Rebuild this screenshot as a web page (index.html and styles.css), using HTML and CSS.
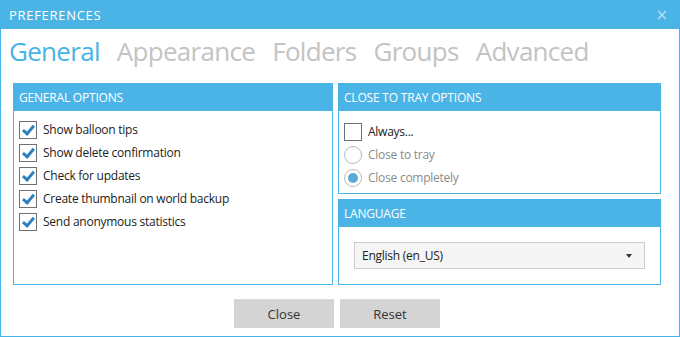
FILE: index.html
```html
<!DOCTYPE html>
<html lang="en">
<head>
    <meta charset="UTF-8">
    <title>Preferences</title>
    <link rel="stylesheet" href="styles.css">
</head>
<body>

    <div class="window">
        <!-- Title bar -->
        <div class="titlebar">
            <span class="title">PREFERENCES</span>
            <svg class="close-x" width="10" height="10" viewBox="0 0 10 10">
                <path d="M1 1 L9 9 M9 1 L1 9" stroke="#b7e1f6" stroke-width="1.4" fill="none"/>
            </svg>
        </div>

        <!-- Tabs -->
        <div class="tabs">
            <span class="tab active">General</span>
            <span class="tab">Appearance</span>
            <span class="tab">Folders</span>
            <span class="tab">Groups</span>
            <span class="tab">Advanced</span>
        </div>

        <!-- Panels -->
        <div class="panels">
            <div class="panel general">
                <div class="panel-header">GENERAL OPTIONS</div>
                <div class="panel-body">
                    <label class="option"><span class="check checked"></span>Show balloon tips</label>
                    <label class="option"><span class="check checked"></span>Show delete confirmation</label>
                    <label class="option"><span class="check checked"></span>Check for updates</label>
                    <label class="option"><span class="check checked"></span>Create thumbnail on world backup</label>
                    <label class="option"><span class="check checked"></span>Send anonymous statistics</label>
                </div>
            </div>

            <div class="right-col">
                <div class="panel tray">
                    <div class="panel-header">CLOSE TO TRAY OPTIONS</div>
                    <div class="panel-body">
                        <label class="option"><span class="check"></span>Always...</label>
                        <label class="option disabled"><span class="radio"></span>Close to tray</label>
                        <label class="option disabled"><span class="radio selected"></span>Close completely</label>
                    </div>
                </div>
                <div class="panel language">
                    <div class="panel-header">LANGUAGE</div>
                    <div class="panel-body">
                        <div class="dropdown">
                            <span>English (en_US)</span>
                            <span class="arrow"></span>
                        </div>
                    </div>
                </div>
            </div>
        </div>

        <!-- Buttons -->
        <div class="buttons">
            <button class="btn">Close</button>
            <button class="btn">Reset</button>
        </div>
    </div>

</body>
</html>
```

FILE: styles.css
```css
body {
    margin: 0;
    padding: 0;
    font-family: "Segoe UI", "Open Sans", sans-serif;
    background-color: #ffffff;
}

.window {
    width: 680px;
    height: 337px;
    box-sizing: border-box;
    border: 1px solid #47b3e6;
    display: flex;
    flex-direction: column;
}

/* Title bar */
.titlebar {
    height: 28px;
    background-color: #4bb4e6;
    display: flex;
    align-items: center;
    justify-content: space-between;
    padding: 1px 12px 0 8px;
    margin-top: -1px;
}

.title {
    color: #ffffff;
    font-size: 13px;
    letter-spacing: 0.7px;
}

/* Tabs */
.tabs {
    display: flex;
    gap: 17px;
    padding: 0 0 0 8px;
    height: 54px;
    box-sizing: border-box;
}

.tab {
    font-size: 26px;
    letter-spacing: -0.7px;
    color: #c3c3c3;
    line-height: 44px;
}

.tab.active {
    color: #47b3e6;
}

/* Panels */
.panels {
    display: flex;
    gap: 5px;
    padding: 0 18px 0 12px;
    height: 202px;
}

.panel {
    border: 1px solid #47b3e6;
    box-sizing: border-box;
}

.general {
    flex: 0 0 320px;
}

.right-col {
    flex: 1;
    display: flex;
    flex-direction: column;
    gap: 5px;
}

.tray {
    height: 111px;
}

.language {
    flex: 1;
}

.panel-header {
    background-color: #4bb4e6;
    color: #ffffff;
    font-size: 12px;
    letter-spacing: -0.2px;
    height: 27px;
    line-height: 27px;
    padding-left: 5px;
}

.panel-body {
    padding: 7px 5px 0 5px;
}

.tray .panel-body {
    padding-top: 9px;
}

.option {
    display: flex;
    align-items: center;
    gap: 6px;
    height: 23px;
    font-size: 12px;
    letter-spacing: -0.25px;
    color: #222222;
}

.option.disabled {
    color: #8a8a8a;
}

.check {
    width: 16px;
    height: 16px;
    border: 1px solid #707070;
    background-color: #ffffff;
    position: relative;
}

.check.checked::after {
    content: "";
    position: absolute;
    left: 5px;
    top: 1px;
    width: 4px;
    height: 9px;
    border: solid #2b80bd;
    border-width: 0 3px 3px 0;
    transform: rotate(40deg);
}

.radio {
    width: 16px;
    height: 16px;
    border: 1px solid #b9b9b9;
    border-radius: 50%;
    background-color: #ffffff;
    position: relative;
}

.radio.selected::after {
    content: "";
    position: absolute;
    left: 3px;
    top: 3px;
    width: 10px;
    height: 10px;
    border-radius: 50%;
    background-color: #5aa9d6;
}

/* Language dropdown */
.language .panel-body {
    padding: 15px 15px 0 15px;
}

.dropdown {
    height: 25px;
    background-color: #f5f5f5;
    border: 1px solid #cccccc;
    display: flex;
    align-items: center;
    justify-content: space-between;
    padding: 0 12px 0 7px;
    font-size: 12px;
    letter-spacing: -0.25px;
    color: #222222;
}

.arrow {
    width: 0;
    height: 0;
    border-left: 3px solid transparent;
    border-right: 3px solid transparent;
    border-top: 4px solid #333333;
}

/* Buttons */
.buttons {
    display: flex;
    justify-content: center;
    gap: 6px;
    padding: 14px 6px 0 0;
}

.btn {
    width: 100px;
    height: 29px;
    border: none;
    border-top: 1px solid #dcdcdc;
    background-color: #d4d4d4;
    font-family: "Segoe UI", "Open Sans", sans-serif;
    font-size: 13px;
    color: #333333;
}
```
